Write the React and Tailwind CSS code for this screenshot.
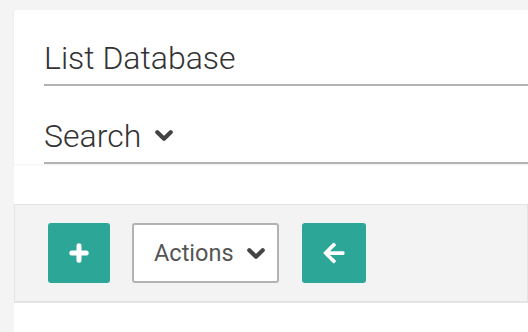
import React from "react";
import { FaArrowLeft } from "react-icons/fa";

function Chevron({ className = "" }) {
  return (
    <svg className={className} width="18" height="11" viewBox="0 0 18 11" fill="none">
      <path d="M2.3 2.3 L9 8.7 L15.7 2.3" stroke="currentColor" strokeWidth="4.2" strokeLinecap="round" strokeLinejoin="round" />
    </svg>
  );
}

function Plus() {
  return (
    <svg width="20" height="20" viewBox="0 0 20 20" fill="none">
      <path d="M10 2.8 V17.2 M2.8 10 H17.2" stroke="currentColor" strokeWidth="5" strokeLinecap="round" />
    </svg>
  );
}

export default function App() {
  return (
    <div className="h-[332px] w-[528px] overflow-hidden bg-[#f4f4f4] pl-[14px] pt-[10px]" style={{ fontFamily: "Roboto, 'Liberation Sans', sans-serif" }}>
      <div className="h-full bg-white rounded-tl-[3px]">
        <div className="pl-[30px] shadow-[0_1px_2px_rgba(0,0,0,0.06)]">
          <div className="h-[76px] border-b-2 border-[#b3b3b3] flex items-end pb-[10px]">
            <span className="text-[32px] font-light leading-none text-[#333]">List Database</span>
          </div>
          <div className="h-[78px] border-b-2 border-[#b3b3b3] flex items-end pb-[10px]">
            <span className="text-[32px] font-light leading-none text-[#333]">Search</span>
            <Chevron className="ml-[14px] mb-[11px] text-[#444]" />
          </div>
        </div>
        <div className="mt-[40px] h-[99px] bg-[#f3f3f3] border border-[#e4e4e4] border-b-2 flex items-center pl-[33px]">
          <button className="w-[62px] h-[60px] rounded-[3px] bg-[#2ca697] flex items-center justify-center text-white">
            <Plus />
          </button>
          <button className="ml-[22px] w-[147px] h-[60px] rounded-[3px] bg-white border-2 border-[#b3b3b3] flex items-center pl-[20px] text-[#555]">
            <span className="text-[23.5px] leading-none mt-[2px]">Actions</span>
            <Chevron className="ml-[13px] text-[#444]" />
          </button>
          <button className="ml-[23px] w-[64px] h-[60px] rounded-[3px] bg-[#2ca697] flex items-center justify-center text-white">
            <FaArrowLeft size={24} />
          </button>
        </div>
      </div>
    </div>
  );
}
